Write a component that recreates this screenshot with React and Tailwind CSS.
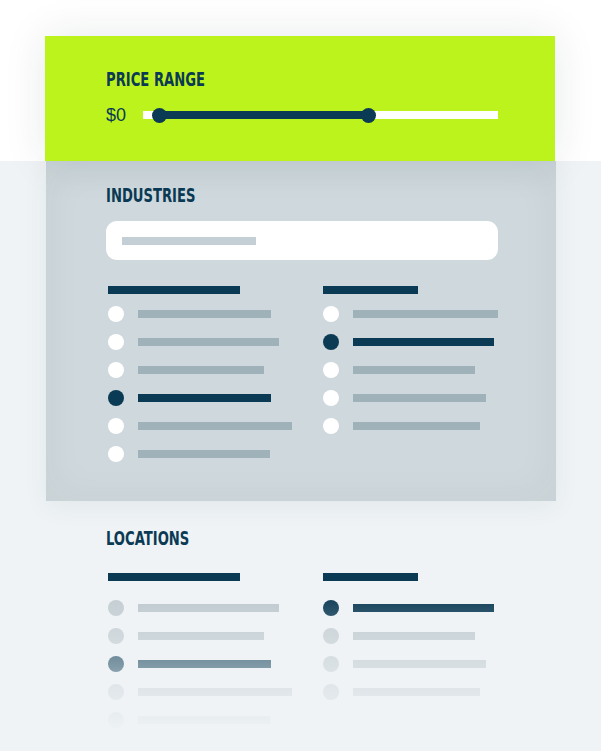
import React from "react";

const heading = "origin-left scale-x-[0.77] font-['DejaVu_Sans_Condensed','DejaVu_Sans',sans-serif] font-bold text-[19px] leading-[18px] text-[#0b3a54]";

const industries = {
  left: [
    { w: 133 },
    { w: 141 },
    { w: 126 },
    { w: 133, on: true },
    { w: 154 },
    { w: 132 },
  ],
  right: [
    { w: 145 },
    { w: 141, on: true },
    { w: 122 },
    { w: 133 },
    { w: 127 },
  ],
};

const locations = {
  left: [
    { w: 141 },
    { w: 126 },
    { w: 133, on: true },
    { w: 154 },
    { w: 132 },
  ],
  right: [
    { w: 141, on: true },
    { w: 122 },
    { w: 133 },
    { w: 127 },
  ],
};

function Option({ w, on, light }) {
  const dot = on ? "bg-[#0b3a54]" : light ? "bg-[#c3cdd2]" : "bg-white";
  const bar = on ? "bg-[#0b3a54]" : light ? "bg-[#bec9cf]" : "bg-[#9fb2b9]";
  return (
    <div className="flex items-center gap-[14px] h-4">
      <span className={`w-4 h-4 rounded-full ${dot}`} />
      <span className={`h-2 ${bar}`} style={{ width: w }} />
    </div>
  );
}

function Column({ headW, items, light, firstGap }) {
  return (
    <div className="flex flex-col">
      <span className="h-2 bg-[#0b3a54]" style={{ width: headW }} />
      <div className="flex flex-col gap-3" style={{ marginTop: firstGap }}>
        {items.map((it, i) => (
          <Option key={i} {...it} light={light} />
        ))}
      </div>
    </div>
  );
}

function Lists({ data, light, firstGap }) {
  return (
    <div className="flex pl-[2px]">
      <div className="w-[215px]">
        <Column headW={132} items={data.left} light={light} firstGap={firstGap} />
      </div>
      <Column headW={95} items={data.right} light={light} firstGap={firstGap} />
    </div>
  );
}

export default function App() {
  return (
    <div className="h-[751px] overflow-hidden bg-[#eff3f5]">
      {/* price range */}
      <div className="bg-white pt-[36px]">
        <section className="relative z-10 ml-[45px] w-[510px] h-[125px] bg-[#bdf31c] pl-[61px] pr-[57px] pt-[34px] shadow-[0_0_40px_rgba(20,40,50,0.10)]">
          <h2 className={heading}>PRICE RANGE</h2>
          <div className="flex items-center h-4 mt-[19px]">
            <span className="w-[37px] font-['Liberation_Sans',sans-serif] text-[18px] leading-4 text-[#0b3a54]">
              $0
            </span>
            <div className="relative flex-1 h-2 bg-white">
              <span className="absolute left-[16px] top-0 h-2 w-[209px] bg-[#0b3a54]" />
              <span className="absolute left-[9px] -top-[3.5px] w-[15px] h-[15px] rounded-full bg-[#0b3a54]" />
              <span className="absolute left-[218px] -top-[3.5px] w-[15px] h-[15px] rounded-full bg-[#0b3a54]" />
            </div>
          </div>
        </section>
      </div>

      {/* industries */}
      <section className="relative ml-[46px] w-[510px] h-[340px] bg-[#cfd8dc] pl-[60px] pr-[58px] pt-[25px] shadow-[inset_0_0_40px_rgba(40,70,90,0.05),0_6px_24px_rgba(40,70,90,0.06)]">
        <h2 className={heading}>INDUSTRIES</h2>
        <div className="mt-[17px] h-[39px] bg-white rounded-[11px] flex items-center px-4">
          <span className="h-2 w-[134px] bg-[#c4ced5]" />
        </div>
        <div className="mt-[26px]">
          <Lists data={industries} firstGap={12} />
        </div>
      </section>

      {/* locations */}
      <section className="relative ml-[46px] w-[510px] h-[250px] pl-[60px] pt-[28px]">
        <h2 className={heading}>LOCATIONS</h2>
        <div className="mt-[26px]">
          <Lists data={locations} light firstGap={19} />
        </div>
        <div className="absolute left-0 right-0 top-[92px] bottom-0 bg-linear-to-b from-[#eff3f5]/0 to-[#eff3f5] to-90%" />
      </section>
    </div>
  );
}
